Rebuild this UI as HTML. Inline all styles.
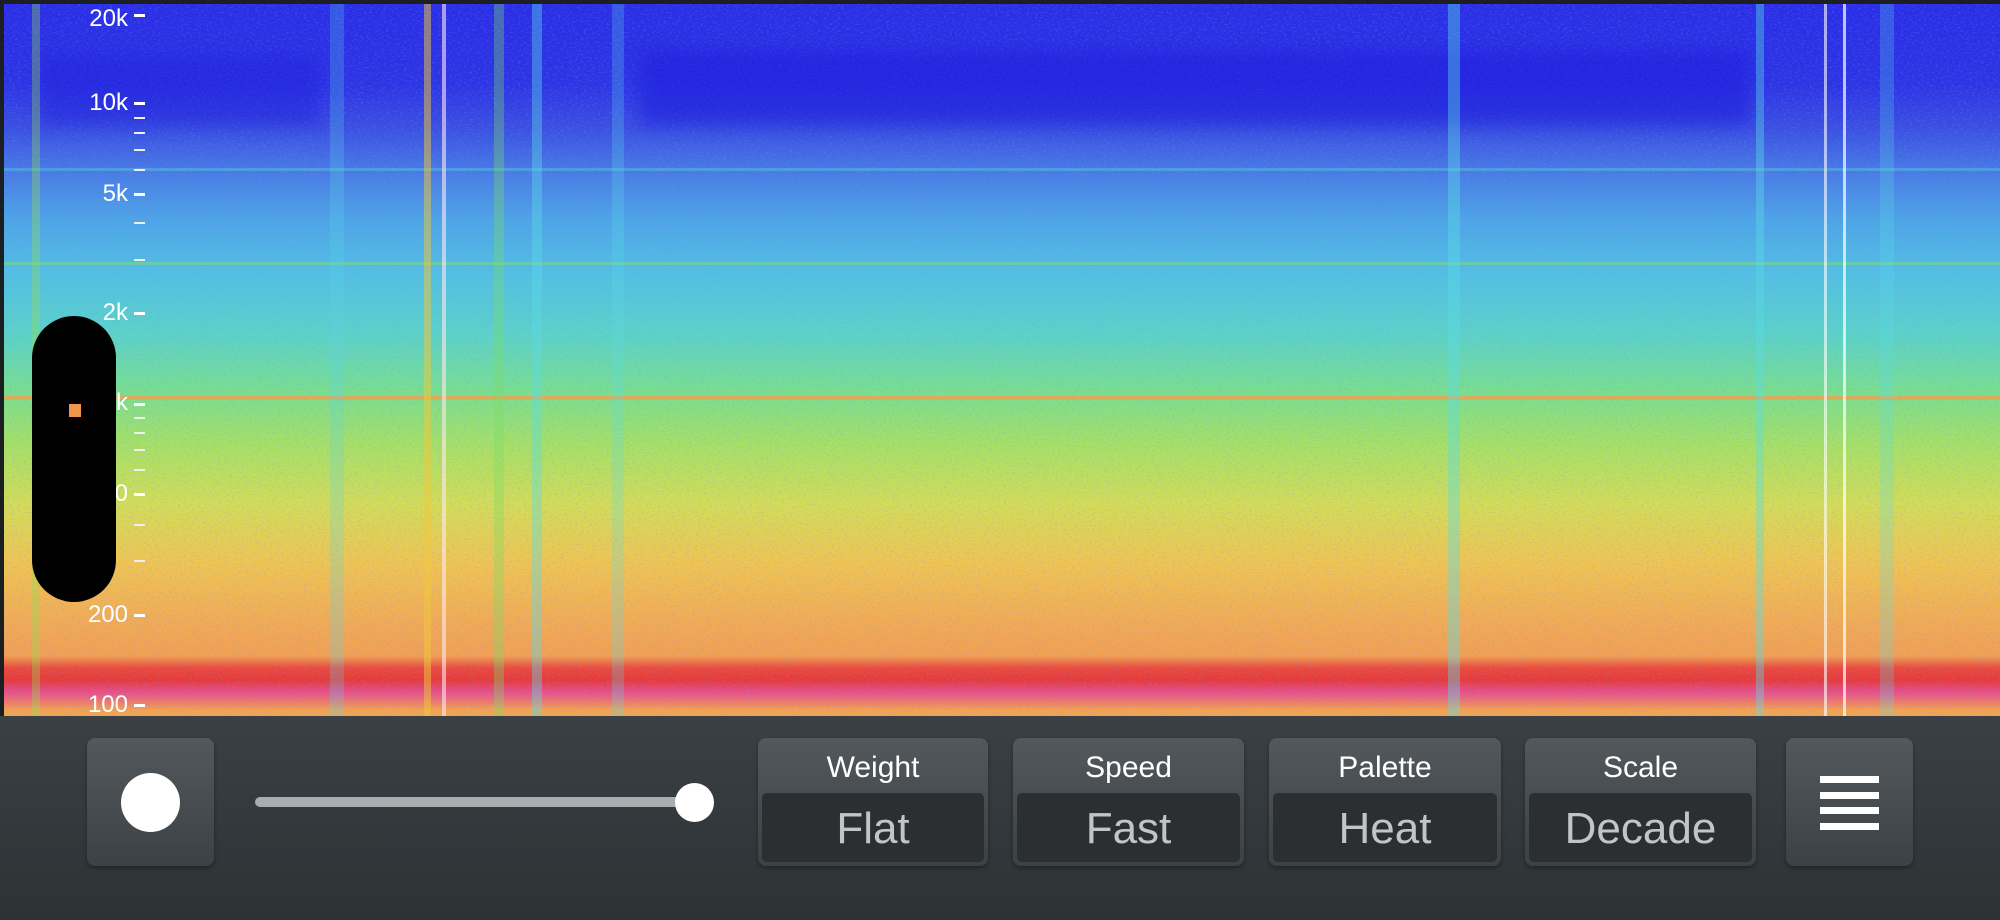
<!DOCTYPE html>
<html><head><meta charset="utf-8"><style>
html,body{margin:0;padding:0;width:2000px;height:920px;overflow:hidden;background:#2f3437;font-family:"Liberation Sans",sans-serif}
#spec{position:absolute;left:0;top:0;width:2000px;height:716px;background:#1c1f22;overflow:hidden}
#grad{position:absolute;left:4px;top:4px;width:1996px;height:712px;
background:linear-gradient(to bottom,#2a2ee6 0px,#2d34e4 80px,#3a50e2 125px,#4878e4 165px,#4ea4e6 215px,#52c0e2 270px,#5cd2c8 330px,#78de90 385px,#a6e066 440px,#d4dc58 500px,#f0c452 560px,#f2aa54 620px,#f2a052 652px,#ea4a3c 664px,#e63a3a 676px,#e6508a 688px,#ee7a6a 698px,#f2a450 706px,#f2a450 712px)}
.v{position:absolute;top:4px;height:712px}
.h{position:absolute;left:4px;width:1996px}
.lab{position:absolute;right:1872px;color:#fff;font-size:24px;line-height:24px;text-align:right}
.tk{position:absolute;left:134px;width:11px;height:3px;background:#fff}
.tm{position:absolute;left:134px;width:11px;height:2px;background:#eee}
#bar{position:absolute;left:0;top:716px;width:2000px;height:204px;background:linear-gradient(#3b4044,#2d3235)}
.btn{position:absolute;top:738px;height:128px;border-radius:8px;background:linear-gradient(#52585c,#3c4145);box-shadow:0 2px 4px rgba(0,0,0,.35)}
.t{position:absolute;left:0;right:0;top:13px;text-align:center;color:#fff;font-size:30px}
.val{position:absolute;left:4px;right:4px;top:55px;bottom:4px;border-radius:5px;background:#2b2f32;color:#c4c4c4;font-size:44px;text-align:center;line-height:72px}
.ln{position:absolute;left:34px;width:59px;height:7px;background:#fff}
</style></head><body>
<div id="spec">
 <div id="grad"></div>
 <svg style="position:absolute;left:4px;top:4px" width="1996" height="712">
  <filter id="n"><feTurbulence type="fractalNoise" baseFrequency="0.35 0.6" numOctaves="2" seed="3"/><feColorMatrix values="0 0 0 0 0.2  0 0 0 0 0.3  0 0 0 0 0.9  0 0 0 2.2 -1.1"/></filter>
  <rect width="1996" height="712" filter="url(#n)" opacity="0.35"/>
 </svg>
 <div class="h" style="top:50px;height:75px;background:rgba(30,30,220,.55);left:640px;width:1110px;filter:blur(8px)"></div>
 <div class="h" style="top:55px;height:70px;background:rgba(30,30,220,.45);left:40px;width:280px;filter:blur(8px)"></div>
 <div class="h" style="top:396px;height:4px;background:rgba(240,160,80,.8)"></div>
 <div class="h" style="top:168px;height:3px;background:rgba(90,220,230,.35)"></div>
 <div class="h" style="top:262px;height:3px;background:rgba(140,230,90,.4)"></div>
 <div class="v" style="left:32px;width:8px;background:rgba(150,220,80,.35)"></div>
 <div class="v" style="left:330px;width:14px;background:rgba(90,210,230,.25)"></div>
 <div class="v" style="left:424px;width:7px;background:rgba(240,200,60,.5)"></div>
 <div class="v" style="left:442px;width:4px;background:rgba(255,230,240,.6)"></div>
 <div class="v" style="left:494px;width:10px;background:rgba(120,220,100,.35)"></div>
 <div class="v" style="left:532px;width:10px;background:rgba(90,220,230,.4)"></div>
 <div class="v" style="left:612px;width:12px;background:rgba(90,220,230,.25)"></div>
 <div class="v" style="left:1448px;width:12px;background:rgba(90,220,230,.4)"></div>
 <div class="v" style="left:1756px;width:8px;background:rgba(90,220,230,.4)"></div>
 <div class="v" style="left:1824px;width:3px;background:rgba(255,255,255,.6)"></div>
 <div class="v" style="left:1843px;width:3px;background:rgba(255,255,255,.7)"></div>
 <div class="v" style="left:1880px;width:14px;background:rgba(90,220,230,.25)"></div>

 <div class="lab" style="top:7px">20k</div><div class="tk" style="top:14px"></div>
 <div class="lab" style="top:91px">10k</div><div class="tk" style="top:102px"></div>
 <div class="lab" style="top:182px">5k</div><div class="tk" style="top:193px"></div>
 <div class="lab" style="top:301px">2k</div><div class="tk" style="top:312px"></div>
 <div class="lab" style="top:391px">1k</div><div class="tk" style="top:403px"></div>
 <div class="lab" style="top:482px">500</div><div class="tk" style="top:493px"></div>
 <div class="lab" style="top:603px">200</div><div class="tk" style="top:614px"></div>
 <div class="lab" style="top:693px">100</div><div class="tk" style="top:704px"></div>
 <div class="tm" style="top:117px"></div><div class="tm" style="top:132px"></div><div class="tm" style="top:149px"></div><div class="tm" style="top:169px"></div>
 <div class="tm" style="top:222px"></div><div class="tm" style="top:259px"></div>
 <div class="tm" style="top:417px"></div><div class="tm" style="top:432px"></div><div class="tm" style="top:449px"></div><div class="tm" style="top:469px"></div>
 <div class="tm" style="top:524px"></div><div class="tm" style="top:560px"></div>

 <div style="position:absolute;left:32px;top:316px;width:84px;height:286px;border-radius:42px;background:#000"></div>
 <div style="position:absolute;left:69px;top:404px;width:12px;height:13px;background:#f0954a"></div>
</div>
<div id="bar"></div>
<div class="btn" style="left:87px;width:127px"><div style="position:absolute;left:34px;top:35px;width:59px;height:59px;border-radius:50%;background:#fff"></div></div>
<div style="position:absolute;left:255px;top:797px;width:440px;height:10px;border-radius:5px;background:#a9adaf"></div>
<div style="position:absolute;left:675px;top:783px;width:39px;height:39px;border-radius:50%;background:#fff"></div>
<div class="btn" style="left:758px;width:230px"><div class="t">Weight</div><div class="val">Flat</div></div>
<div class="btn" style="left:1013px;width:231px"><div class="t">Speed</div><div class="val">Fast</div></div>
<div class="btn" style="left:1269px;width:232px"><div class="t">Palette</div><div class="val">Heat</div></div>
<div class="btn" style="left:1525px;width:231px"><div class="t">Scale</div><div class="val">Decade</div></div>
<div class="btn" style="left:1786px;width:127px">
 <div class="ln" style="top:38px"></div><div class="ln" style="top:54px"></div><div class="ln" style="top:69px"></div><div class="ln" style="top:85px"></div>
</div>
</body></html>
